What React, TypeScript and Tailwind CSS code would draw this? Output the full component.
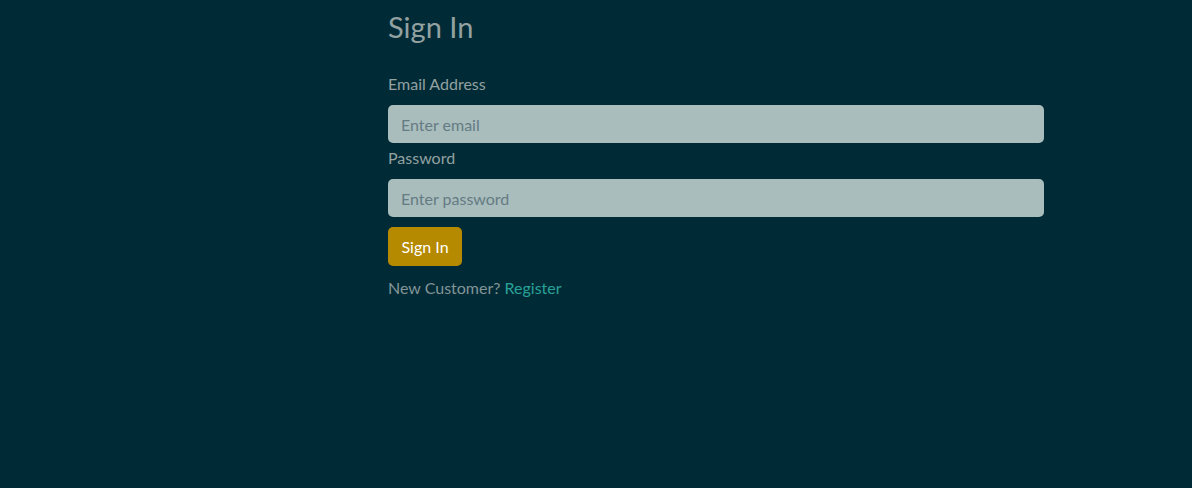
import React from 'react';

export default function App() {
  return (
    <div className="min-h-[488px] w-full bg-[#002b36] font-['Lato','Noto_Sans',sans-serif] text-[#839496]">
      <div className="ml-[388px] w-[656px] pt-[8px]">
        <h1 className="text-[29px] leading-[38px] font-normal text-[#93a1a1]">Sign In</h1>

        <form className="mt-[26px]" onSubmit={(e) => e.preventDefault()}>
          <label className="block text-[16px] leading-[24px] text-[#93a1a1]">Email Address</label>
          <input
            type="email"
            placeholder="Enter email"
            className="mt-[9px] block h-[38px] w-full rounded-[5px] bg-[#a9bdbd] px-[13px] text-[16px] text-[#073642] placeholder:text-[#657b83] outline-none"
          />
          <label className="mt-[3px] block text-[16px] leading-[24px] text-[#93a1a1]">Password</label>
          <input
            type="password"
            placeholder="Enter password"
            className="mt-[9px] block h-[38px] w-full rounded-[5px] bg-[#a9bdbd] px-[13px] text-[16px] text-[#073642] placeholder:text-[#657b83] outline-none"
          />
          <button
            type="submit"
            className="mt-[10px] h-[39px] rounded-[5px] bg-[#b58900] px-[13.5px] text-[16px] text-white"
          >
            Sign In
          </button>
        </form>

        <p className="mt-[10px] text-[16px] leading-[24px]">
          New Customer? <a href="#" className="text-[#2aa198]">Register</a>
        </p>
      </div>
    </div>
  );
}
